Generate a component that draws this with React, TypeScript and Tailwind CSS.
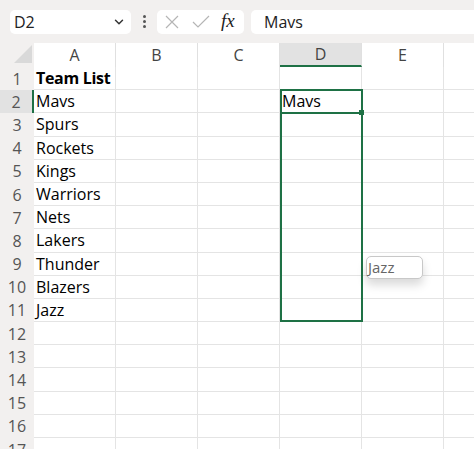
import { ChevronDown } from "lucide-react";

const cols = ["A", "B", "C", "D", "E", "F"];
const teams = [
  "Team List",
  "Mavs",
  "Spurs",
  "Rockets",
  "Kings",
  "Warriors",
  "Nets",
  "Lakers",
  "Thunder",
  "Blazers",
  "Jazz",
];

const font = { fontFamily: "'Open Sans', 'Noto Sans', sans-serif" };

function Toolbar() {
  return (
    <div className="flex h-[43px] items-center bg-[#f2f0ef] pl-[10px]">
      <div className="flex h-[24px] w-[121px] items-center justify-between rounded-[5px] bg-white pl-[4px] pr-[5px] text-[16px] text-[#222]">
        <span>D2</span>
        <ChevronDown size={14} strokeWidth={2.5} className="text-[#333]" />
      </div>
      <div className="flex w-[26px] flex-col items-center gap-[2px]">
        <span className="h-[3px] w-[3px] rounded-full bg-[#555]" />
        <span className="h-[3px] w-[3px] rounded-full bg-[#555]" />
        <span className="h-[3px] w-[3px] rounded-full bg-[#555]" />
      </div>
      <div className="flex h-[24px] w-[87px] items-center rounded-[5px] bg-white pl-[8px]">
        <svg width="14" height="14" viewBox="0 0 14 14" className="text-[#b5b5b5]">
          <path d="M1 1L13 13M13 1L1 13" stroke="currentColor" strokeWidth="1.2" fill="none" />
        </svg>
        <svg width="18" height="14" viewBox="0 0 18 14" className="ml-[13px] text-[#b5b5b5]">
          <path d="M1 7L6 12L17 1" stroke="currentColor" strokeWidth="1.2" fill="none" />
        </svg>
        <span
          className="ml-[11px] text-[19px] italic text-[#222]"
          style={{ fontFamily: "'Liberation Serif', serif" }}
        >
          fx
        </span>
      </div>
      <div className="ml-[7px] flex h-[24px] flex-1 items-center rounded-l-[5px] bg-white pl-[13px] text-[16px] text-[#222]">
        Mavs
      </div>
    </div>
  );
}

function HeaderRow() {
  return (
    <div className="flex h-[24px] bg-[#f2f0ef]">
      <div className="relative w-[34px] shrink-0 bg-[#f2f0ef]">
        <svg width="20" height="20" viewBox="0 0 20 20" className="absolute bottom-[3px] right-[1px]">
          <path d="M19 1L19 19L1 19Z" fill="#d9d9d9" />
        </svg>
      </div>
      {cols.map((c) => (
        <div
          key={c}
          className={
            c === "D"
              ? "flex w-[82px] shrink-0 items-center justify-center border-b-2 border-r border-b-[#1e7145] border-r-[#e0e0e0] bg-[#e2e2e2] text-[16px] text-[#444]"
              : "flex w-[82px] shrink-0 items-center justify-center border-r border-[#e0e0e0] bg-white text-[16px] text-[#444]"
          }
        >
          {c}
        </div>
      ))}
    </div>
  );
}

function Row({ n, text }: { n: number; text?: string }) {
  return (
    <div className="flex h-[23.2px]">
      <div
        className={
          n === 2
            ? "flex w-[34px] shrink-0 items-center justify-center border-r-2 border-[#1e7145] bg-[#e2e2e2] text-[16px] text-[#555]"
            : "flex w-[34px] shrink-0 items-center justify-center bg-[#f2f0ef] text-[16px] text-[#555]"
        }
      >
        {n}
      </div>
      {cols.map((c) => (
        <div
          key={c}
          className={
            "flex w-[82px] shrink-0 items-center overflow-visible whitespace-nowrap border-b border-r border-[#e4e4e4] pl-[2px] text-[16px] text-black " +
            (c === "A" && n === 1 ? "font-bold tracking-[-0.3px]" : "")
          }
        >
          {c === "A" ? text : c === "D" && n === 2 ? "Mavs" : ""}
        </div>
      ))}
    </div>
  );
}

export default function App() {
  return (
    <div className="h-[449px] w-[474px] overflow-hidden bg-white" style={font}>
      <Toolbar />
      <div className="relative">
        <HeaderRow />
        {Array.from({ length: 17 }, (_, i) => (
          <Row key={i} n={i + 1} text={teams[i]} />
        ))}
        {/* selection range D2:D11 */}
        <div className="pointer-events-none absolute left-[280px] top-[46px] h-[233px] w-[83px] border-2 border-[#1e7145]" />
        <div className="pointer-events-none absolute left-[280px] top-[46px] h-[24.5px] w-[83px] border-2 border-[#1e7145]" />
        <div className="absolute left-[359px] top-[67px] h-[5px] w-[5px] bg-[#1e7145]" />
        {/* autocomplete tip */}
        <div className="absolute left-[366px] top-[213px] flex h-[23px] w-[57px] items-center rounded-[5px] border border-[#c8c8c8] bg-white pl-[1px] text-[15px] text-[#666] shadow-[0_6px_10px_rgba(0,0,0,0.15)]">
          Jazz
        </div>
      </div>
    </div>
  );
}
